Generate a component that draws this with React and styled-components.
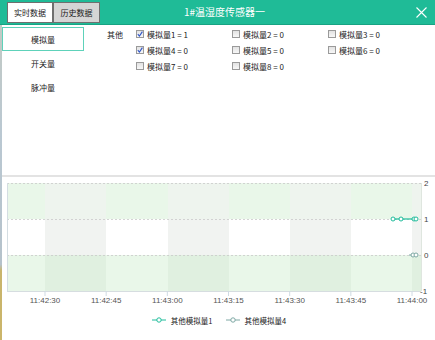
import React from 'react';
import styled, { createGlobalStyle } from 'styled-components';

const Global = createGlobalStyle`
  html, body { margin: 0; padding: 0; background: #fff; }
  body {
    font-family: "Noto Sans CJK SC", "Noto Sans", sans-serif;
    width: 435px; height: 340px; overflow: hidden;
  }
`;

const Page = styled.div`
  width: 435px; height: 340px;
  display: flex; flex-direction: column;
  background: #fff;
`;

const Header = styled.header`
  height: 24px; flex: none;
  display: grid; grid-template-columns: 1fr auto 1fr; align-items: start;
  background: #1fbb97;
  border-bottom: 1px solid #17a383;
  padding: 0 8px 0 7px;
`;

const Tabs = styled.div`
  display: flex; margin-top: 2px;
`;

const Tab = styled.button`
  box-sizing: border-box;
  height: 21px; width: ${p => p.$w}px;
  padding: 0; margin: 0;
  border: 1px solid #6f6f6f;
  background: ${p => (p.$active ? '#ffffff' : '#d5d5d5')};
  color: #1a1a1a;
  font: 8px "Noto Sans CJK SC", sans-serif;
  display: flex; align-items: center; justify-content: center;
`;

const Title = styled.div`
  color: #fff;
  font-size: 10px;
  line-height: 24px;
  padding-left: 15px;
  white-space: nowrap;
`;

const Close = styled.div`
  justify-self: end;
  height: 24px;
  display: flex; align-items: center;
`;

const Body = styled.div`
  flex: 1; display: flex; min-height: 0;
`;

const Edge = styled.div`
  width: 2px; flex: none;
  background: linear-gradient(to bottom, #c3cac4 0%, #bac8d2 35%, #b5c2cb 76%, #c9b56c 78%, #cbb56a 100%);
`;

const Content = styled.div`
  flex: 1; display: flex; flex-direction: column; min-width: 0;
`;

const Top = styled.div`
  height: 150px; flex: none; display: flex;
`;

const Nav = styled.nav`
  width: 82px; flex: none;
  padding-top: 2px;
  display: flex; flex-direction: column;
`;

const NavItem = styled.div`
  box-sizing: border-box;
  height: 24px;
  border: 1px solid ${p => (p.$active ? '#5ed2ba' : 'transparent')};
  display: flex; align-items: center; justify-content: center;
  font-size: 8px; color: #222;
`;

const Panel = styled.div`
  display: flex;
  padding-top: 1px;
  padding-left: 23px;
`;

const GroupLabel = styled.div`
  width: 29px; height: 16px;
  display: flex; align-items: center;
  font-size: 8px; color: #222;
`;

const Grid = styled.div`
  display: grid;
  grid-template-columns: repeat(3, 96px);
  grid-auto-rows: 16px;
`;

const Check = styled.label`
  display: flex; align-items: center; gap: 3px;
  font-size: 8px; color: #222;
  white-space: nowrap;
`;

const Box = styled.span`
  box-sizing: border-box;
  width: 8px; height: 8px;
  border: 1px solid #9a9a9a;
  background: linear-gradient(#e2e2e2, #f7f7f7);
  display: flex; align-items: center; justify-content: center;
`;

const Divider = styled.div`
  height: 2px; flex: none;
  background: #e3e3e3;
`;

const ChartSvg = styled.svg`
  display: block; flex: none;
`;

const Legend = styled.div`
  height: 20px;
  display: flex; align-items: center; justify-content: center;
  gap: 13px;
  padding-left: 1px;
`;

const LegendItem = styled.div`
  display: flex; align-items: center; gap: 5px;
  font-size: 7.5px; color: #222;
`;

const checks = [
  { label: '模拟量1 = 1', on: true },
  { label: '模拟量2 = 0' },
  { label: '模拟量3 = 0' },
  { label: '模拟量4 = 0', on: true },
  { label: '模拟量5 = 0' },
  { label: '模拟量6 = 0' },
  { label: '模拟量7 = 0' },
  { label: '模拟量8 = 0' },
];

const ticks = ['11:42:30', '11:42:45', '11:43:00', '11:43:15', '11:43:30', '11:43:45', '11:44:00'];
const tx = i => 45 + i * 61.17;
const vy = v => 255 - 36 * v;

const C1 = '#1fbc9b';
const C2 = '#7ea8a4';

// column boundaries: alternating plain / shaded columns
const bounds = [7, 45, 106, 168, 229, 290, 351, 412, 421];
// band fills: [plain, shaded] per horizontal band (top → bottom)
const bands = [
  { v: 2, fill: ['#e9f7e9', '#eef4ee'] },
  { v: 1, fill: ['#ffffff', '#f1f3f1'] },
  { v: 0, fill: ['#e9f7e9', '#e0f0e0'] },
];

function Chart() {
  const L = 7, R = 421, T = 183, B = 291;
  return (
    <ChartSvg width="433" height="133" viewBox="2 177 433 133">
      {bands.map(b =>
        bounds.slice(0, -1).map((x, i) => (
          <rect key={`${b.v}-${i}`} x={x} y={vy(b.v)} width={bounds[i + 1] - x} height={36} fill={b.fill[i % 2]} />
        ))
      )}
      {[2, 1, 0].map(v => (
        <line key={v} x1={L} x2={R} y1={vy(v) + 0.5} y2={vy(v) + 0.5} stroke="#c9c9c9" strokeDasharray="2 2" strokeWidth="0.8" />
      ))}
      <line x1={R + 0.5} x2={R + 0.5} y1={T} y2={B} stroke="#dfe6df" strokeWidth="1" />
      <line x1={L} x2={R} y1={B + 0.5} y2={B + 0.5} stroke="#d6dde0" strokeWidth="1" />
      <line x1={L + 0.5} x2={L + 0.5} y1={T} y2={B} stroke="#d4dde2" strokeWidth="1" />
      {ticks.map((t, i) => (
        <g key={t}>
          <line x1={tx(i)} x2={tx(i)} y1={B} y2={B + 5} stroke="#cfdbe3" strokeWidth="1" />
          <text x={tx(i)} y={303} textAnchor="middle" fontSize="8" fill="#555" fontFamily="Liberation Sans, sans-serif">{t}</text>
        </g>
      ))}
      {[2, 1, 0, -1].map(v => (
        <text key={v} x={v < 0 ? 420 : 424} y={vy(v) + 3} fontSize="8" fill="#444" fontFamily="Liberation Sans, sans-serif">{v}</text>
      ))}
      <line x1={409} x2={416} y1={vy(0)} y2={vy(0)} stroke={C2} strokeWidth="1" />
      {[413, 416].map(x => (
        <circle key={x} cx={x} cy={vy(0)} r="2" fill="#fff" stroke={C2} strokeWidth="1" />
      ))}
      <line x1={393} x2={416} y1={vy(1)} y2={vy(1)} stroke={C1} strokeWidth="1.2" />
      {[393, 401, 414, 416].map(x => (
        <circle key={x} cx={x} cy={vy(1)} r="2" fill="#fff" stroke={C1} strokeWidth="1" />
      ))}
    </ChartSvg>
  );
}

function Marker({ color }) {
  return (
    <svg width="14" height="6" viewBox="0 0 14 6">
      <line x1="0" x2="14" y1="3" y2="3" stroke={color} strokeWidth="1" />
      <circle cx="7" cy="3" r="2.2" fill="#fff" stroke={color} strokeWidth="1" />
    </svg>
  );
}

function Tick() {
  return (
    <svg width="6" height="6" viewBox="0 0 6 6">
      <path d="M0.8 3.2 L2.4 5 L5.4 0.6" fill="none" stroke="#2f55c8" strokeWidth="1.1" />
    </svg>
  );
}

export default function App() {
  return (
    <Page>
      <Global />
      <Header>
        <Tabs>
          <Tab $active $w={46}>实时数据</Tab>
          <Tab $w={47}>历史数据</Tab>
        </Tabs>
        <Title>1#温湿度传感器一</Title>
        <Close>
          <svg width="11" height="11" viewBox="0 0 11 11">
            <path d="M0.5 0.5 L10.5 10.5 M10.5 0.5 L0.5 10.5" stroke="#fff" strokeWidth="1.1" />
          </svg>
        </Close>
      </Header>
      <Body>
        <Edge />
        <Content>
          <Top>
            <Nav>
              <NavItem $active>模拟量</NavItem>
              <NavItem>开关量</NavItem>
              <NavItem>脉冲量</NavItem>
            </Nav>
            <Panel>
              <GroupLabel>其他</GroupLabel>
              <Grid>
                {checks.map(c => (
                  <Check key={c.label}>
                    <Box>{c.on && <Tick />}</Box>
                    {c.label}
                  </Check>
                ))}
              </Grid>
            </Panel>
          </Top>
          <Divider />
          <Chart />
          <Legend>
            <LegendItem><Marker color={C1} />其他模拟量1</LegendItem>
            <LegendItem><Marker color={C2} />其他模拟量4</LegendItem>
          </Legend>
        </Content>
      </Body>
    </Page>
  );
}
